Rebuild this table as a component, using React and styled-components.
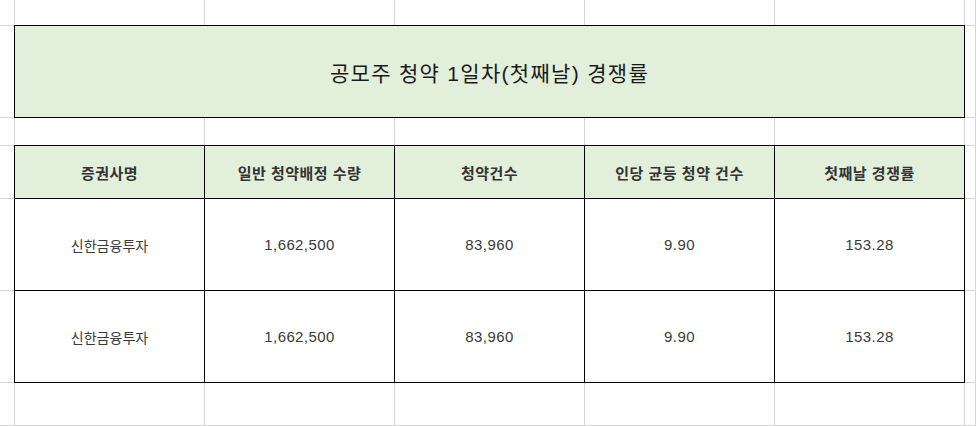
import styled, { createGlobalStyle } from 'styled-components';

const GlobalStyle = createGlobalStyle`
	html, body {
		margin: 0;
		padding: 0;
		background: #ffffff;
	}
	body {
		font-family: 'Liberation Sans', 'Noto Sans CJK KR', sans-serif;
		color: #222222;
	}
`;

const headers = ['증권사명', '일반 청약배정 수량', '청약건수', '인당 균등 청약 건수', '첫째날 경쟁률'];

const rows = [
	['신한금융투자', '1,662,500', '83,960', '9.90', '153.28'],
	['신한금융투자', '1,662,500', '83,960', '9.90', '153.28'],
];

// sheet rows: 0 blank, 1 title, 2 blank, 3 header, 4-5 data, 6 blank
// sheet cols: 0 narrow, 1-5 table, 6 rest
const isTableArea = (r, c) => c >= 1 && c <= 5 && (r === 1 || (r >= 3 && r <= 5));

const App = () => {
	const fillers = [];
	for (let r = 0; r < 7; r++) {
		for (let c = 0; c < 7; c++) {
			if (!isTableArea(r, c)) {
				fillers.push(<GridCell key={`${r}-${c}`} style={{ gridRow: r + 1, gridColumn: c + 1 }} />);
			}
		}
	}

	return (
		<>
			<GlobalStyle />
			<Sheet>
				{fillers}
				<Title>공모주 청약 1일차(첫째날) 경쟁률</Title>
				{headers.map((h, i) => (
					<HeadCell key={h} col={i + 2}>
						{h}
					</HeadCell>
				))}
				{rows.map((row, ri) =>
					row.map((v, ci) => (
						<DataCell key={`${ri}-${ci}`} row={ri + 5} col={ci + 2} $num={ci > 0}>
							{v}
						</DataCell>
					))
				)}
			</Sheet>
		</>
	);
};

export default App;

const Sheet = styled.div`
	display: grid;
	grid-template-columns: 15px repeat(5, 190px) 1fr;
	grid-template-rows: 26px 92px 28px 53px 92px 92px 1fr;
	width: 100vw;
	height: 100vh;
	overflow: hidden;
`;

const GridCell = styled.div`
	box-sizing: border-box;
	border-right: 1px solid #d4d4d4;
	border-bottom: 1px solid #d4d4d4;
`;

const Box = styled.div`
	box-sizing: border-box;
	margin: -1px 0 0 -1px;
	border: 1px solid #000000;
	display: flex;
	align-items: center;
	justify-content: center;
	white-space: nowrap;
`;

const Title = styled(Box)`
	grid-row: 2;
	grid-column: 2 / 7;
	background: #e2efda;
	font-size: 21px;
	color: #1a1a1a;
	letter-spacing: 1.3px;
`;

const HeadCell = styled(Box)`
	grid-row: 4;
	grid-column: ${(props) => props.col};
	background: #e2efda;
	font-size: 15px;
	font-weight: 700;
	color: #333333;
	letter-spacing: 0.5px;
`;

const DataCell = styled(Box)`
	grid-row: ${(props) => props.row};
	grid-column: ${(props) => props.col};
	background: #ffffff;
	font-size: ${(props) => (props.$num ? '15px' : '14px')};
	font-weight: 400;
	color: #3a3a3a;
	letter-spacing: ${(props) => (props.$num ? '0.4px' : '0')};
`;
